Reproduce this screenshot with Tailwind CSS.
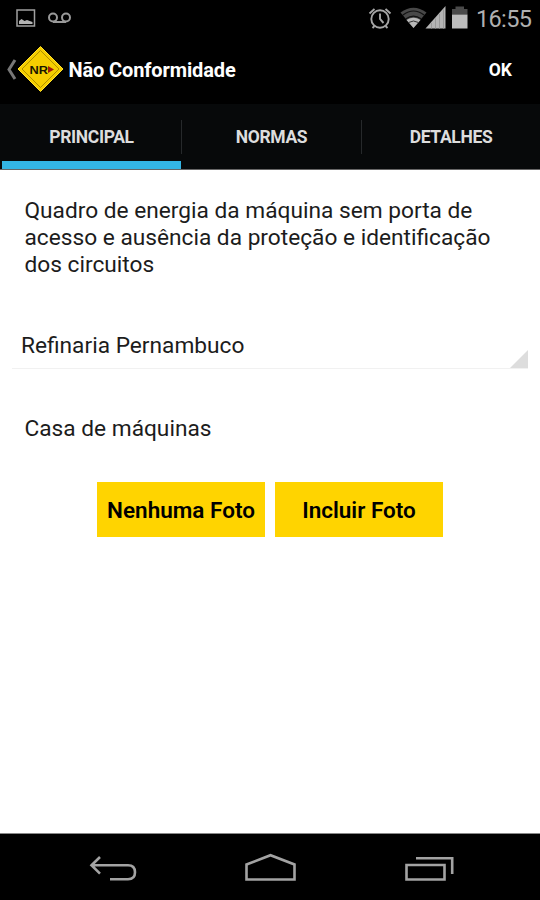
<!DOCTYPE html>
<html lang="pt-BR">
<head>
    <meta charset="UTF-8">
    <meta name="viewport" content="width=device-width, initial-scale=1.0">
    <title>Não Conformidade</title>
    <script src="https://cdn.jsdelivr.net/npm/@tailwindcss/browser@4"></script>
</head>
<body class="bg-white font-['Roboto',sans-serif] text-black">
<div class="flex flex-col w-[540px] h-[900px] overflow-hidden">

    <!-- Status bar -->
    <div class="flex justify-between h-9 bg-black">
        <svg class="w-20 h-9" viewBox="0 0 80 36" fill="none">
            <rect x="17" y="10" width="17.500" height="16" stroke="#a0a0a0" stroke-width="1.500"/>
            <path d="M19 24v-3l2.500-2 3 2 2.500-1 5.500 2v2z" fill="#b4b4b4"/>
            <g stroke="#999" stroke-width="2">
                <circle cx="53" cy="17.500" r="4"/>
                <circle cx="66" cy="17.500" r="4"/>
                <path d="M53 22h13"/>
            </g>
        </svg>
        <div class="flex">
            <svg class="w-[110px] h-9" viewBox="362 0 110 36" fill="none">
                <!-- Alarm -->
                <g stroke="#a6a6a6" stroke-width="1.900">
                    <circle cx="380" cy="19" r="8.700"/>
                    <path d="M380 13.500v5.500l3.500 4M369.500 13.500l5-4.500M390.500 13.500l-5-4.500M374.500 26l-2 2M385.500 26l2 2"/>
                </g>
                <!-- Wifi -->
                <path d="M400.500 12.500Q413.500 3 426.500 12.500L413.500 28z" fill="#484848"/>
                <path d="M403 15q10.500-8 21 0M406 18.800q7.500-5.500 15 0" stroke="#111" stroke-width="1.200"/>
                <path d="M406.500 20q7-4.500 14 0L413.500 28z" fill="#b8b8b8"/>
                <path d="M408.500 22.500q5-3 10 0" stroke="#333" stroke-width="1"/>
                <!-- Signal -->
                <path d="M425.500 28.500L445.500 6v22.500z" fill="#b4b4b4"/>
                <path d="M431.500 23v5.500M435.500 18.500v10M439.500 14v14.500M443.500 9.500v19" stroke="#999" stroke-width="1"/>
                <!-- Battery -->
                <path d="M452 14.500V9h3.500V6.500h8.500V9h3.500v5.500z" fill="#4a4a4a"/>
                <path d="M452 14.500h15.500v14H452z" fill="#bcbcbc"/>
            </svg>
            <span class="w-[68px] pl-[4px] pt-px text-[23.500px] leading-9 tracking-[-0.650px] whitespace-nowrap text-[#b0b0b0]">16:55</span>
        </div>
    </div>

    <!-- Action bar -->
    <header class="flex items-center h-[68px] bg-black text-white">
        <svg class="w-[66px] h-[68px]" viewBox="0 36 66 68" fill="none">
            <path d="M15 60l-6 9.500 6 9.500" stroke="#777" stroke-width="3"/>
            <path d="M40.500 46.500L63 69 40.500 91.500 18 69z" fill="#f5ce00" stroke="#ffe02a" stroke-width="1"/>
            <path d="M40.500 50.500L59 69 40.500 87.500 22 69z" stroke="#9a8000" stroke-width=".8"/>
            <text x="29.500" y="73.500" font-family="Liberation Sans, sans-serif" font-size="11.500" font-weight="700" textLength="18.500" lengthAdjust="spacingAndGlyphs" fill="#1a1700">NR</text>
            <path d="M48 66l6 3.500-6 3.500z" fill="#a31c08"/>
        </svg>
        <h1 class="flex-1 pl-[2.500px] text-[20px] font-bold tracking-[-0.120px]">Não Conformidade</h1>
        <button class="pr-7 text-[17.500px] font-bold">OK</button>
    </header>

    <!-- Tabs -->
    <nav class="grid grid-cols-[181px_181px_178px] h-[66px] bg-[#07090a] border-b border-[#666] text-[17.500px] font-bold tracking-[-0.350px] text-[#ddd]">
        <button class="border-b-8 border-[#33b5e5] ml-[2px] pt-[9px]">PRINCIPAL</button>
        <button class="flex items-center justify-center h-[34px] mt-4 pt-px border-x border-[#26292b]">NORMAS</button>
        <button class="flex items-center justify-center h-[34px] mt-4 pt-px">DETALHES</button>
    </nav>

    <!-- Form -->
    <main class="flex-1 text-[22.700px] leading-[27px] text-[#1c1c1c]">
        <p class="pl-[24.500px] pt-[27px] w-[510px]">Quadro de energia da máquina sem porta de acesso e ausência da proteção e identificação dos circuitos</p>

        <div class="flex items-end justify-between mt-[53px] ml-3 mr-[12px] h-[38px] border-b border-[#f1f1f1]">
            <span class="pl-[9px] pb-[9px]">Refinaria Pernambuco</span>
            <svg class="w-[18px] h-[18px]" viewBox="0 0 18 18"><path d="M18 0v18H0z" fill="#ddd"/></svg>
        </div>

        <p class="pl-[24.500px] mt-[46px]">Casa de máquinas</p>

        <div class="flex justify-center gap-[10px] mt-10 text-black text-[22.500px] font-semibold">
            <button class="w-[168px] h-[55px] pt-px bg-[#ffd400]">Nenhuma Foto</button>
            <button class="w-[168px] h-[55px] pt-px bg-[#ffd400]">Incluir Foto</button>
        </div>
    </main>

    <!-- Navigation bar -->
    <footer class="h-[67px] bg-black border-t border-[#888]">
        <svg class="w-full h-[66px]" viewBox="0 834 540 66" fill="none" stroke="#a3a3a3" stroke-width="2.600">
            <path d="M100 857l-8.500 8.300 8.500 8.300M91.500 865.300h36.500q7 0 7 7t-7 7h-18"/>
            <path d="M246.500 864.500l24-9.300 24 9.300v15h-48z"/>
            <path d="M406.500 865h38v14.500h-38zM416 858.300h36.200V874"/>
        </svg>
    </footer>
</div>
</body>
</html>
